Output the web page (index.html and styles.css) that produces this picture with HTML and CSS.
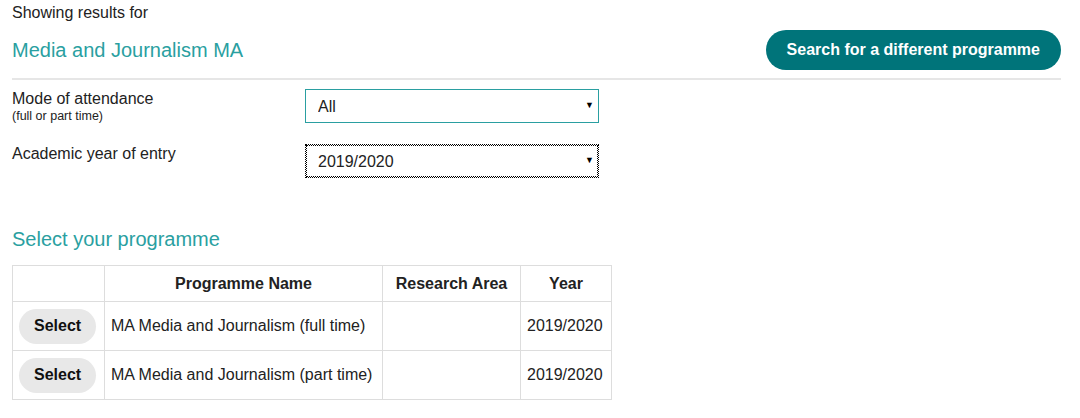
FILE: index.html
```html
<!DOCTYPE html>
<html>
<head>
  <meta charset="UTF-8">
  <title>Select your programme</title>
  <link rel="stylesheet" href="styles.css">
</head>
<body>
  <div class="page">
    <p class="intro">Showing results for</p>

    <div class="results-header">
      <h2 class="title">Media and Journalism MA</h2>
      <button class="search-button">Search for a different programme</button>
    </div>

    <div class="filters">
      <div class="filter-row">
        <label for="mode" class="filter-label">
          Mode of attendance
          <span class="hint">(full or part time)</span>
        </label>
        <div class="select-wrap">
          <select id="mode" class="field">
            <option>All</option>
            <option>Full time</option>
            <option>Part time</option>
          </select>
          <span class="arrow">&#9660;</span>
        </div>
      </div>

      <div class="filter-row">
        <label for="year" class="filter-label">Academic year of entry</label>
        <div class="select-wrap">
          <select id="year" class="field focused">
            <option>2019/2020</option>
            <option>2020/2021</option>
          </select>
          <span class="arrow">&#9660;</span>
        </div>
      </div>
    </div>

    <h2 class="title section-title">Select your programme</h2>

    <table class="programmes">
      <thead>
        <tr>
          <th class="col-select"></th>
          <th class="col-name">Programme Name</th>
          <th class="col-area">Research Area</th>
          <th class="col-year">Year</th>
        </tr>
      </thead>
      <tbody>
        <tr>
          <td><button class="select-button">Select</button></td>
          <td>MA Media and Journalism (full time)</td>
          <td></td>
          <td>2019/2020</td>
        </tr>
        <tr>
          <td><button class="select-button">Select</button></td>
          <td>MA Media and Journalism (part time)</td>
          <td></td>
          <td>2019/2020</td>
        </tr>
      </tbody>
    </table>
  </div>
</body>
</html>
```

FILE: styles.css
```css
:root {
  --teal: #2a9fa1;
  --teal-dark: #00747a;
  --text: #222222;
  --border-light: #dddddd;
  --button-grey: #e8e8e8;
}

body {
  margin: 0;
  background: #ffffff;
  color: var(--text);
  font-family: 'Liberation Sans', Arial, sans-serif;
  font-size: 16px;
}

.page {
  padding: 3px 19px 0 12px;
}

.intro {
  margin: 0;
  line-height: 20px;
}

.results-header {
  display: flex;
  justify-content: space-between;
  align-items: center;
  margin-top: 7px;
  padding-bottom: 8px;
  border-bottom: 2px solid #e6e6e6;
}

.title {
  margin: 0;
  font-size: 20px;
  font-weight: normal;
  line-height: 24px;
  color: var(--teal);
}

.search-button {
  height: 40px;
  padding: 0 21px;
  border: none;
  border-radius: 20px;
  background: var(--teal-dark);
  color: #ffffff;
  font-family: inherit;
  font-size: 16px;
  font-weight: bold;
  cursor: pointer;
}

.filters {
  display: flex;
  flex-direction: column;
  gap: 21px;
  margin-top: 9px;
}

.filter-row {
  display: flex;
  align-items: flex-start;
}

.filter-label {
  width: 293px;
  padding-top: 1px;
  line-height: 18px;
}

.hint {
  display: block;
  margin-top: 2px;
  font-size: 12.5px;
  line-height: 13px;
}

.select-wrap {
  position: relative;
  width: 294px;
}

.field {
  appearance: none;
  -webkit-appearance: none;
  width: 100%;
  height: 34px;
  padding: 0 12px;
  border: 1px solid var(--teal);
  border-radius: 0;
  background: #ffffff;
  color: var(--text);
  font-family: inherit;
  font-size: 16px;
}

.field.focused {
  border: 1px dotted #000000;
  outline: 1px dotted #000000;
  outline-offset: -2px;
}

.arrow {
  position: absolute;
  right: 5px;
  top: 11px;
  font-size: 9px;
  color: #000000;
  pointer-events: none;
}

.section-title {
  margin-top: 49px;
  margin-bottom: 14px;
}

.programmes {
  border-collapse: collapse;
  border: 1px solid var(--border-light);
}

.programmes th,
.programmes td {
  border: 1px solid var(--border-light);
  padding: 0 6px;
}

.programmes th {
  height: 35px;
  font-weight: bold;
  text-align: center;
}

.programmes td {
  height: 48px;
}

.col-select { width: 79px; }
.col-name { width: 265px; }
.col-area { width: 125px; }
.col-year { width: 78px; }

.select-button {
  height: 35px;
  padding: 0 15px;
  border: none;
  border-radius: 18px;
  background: var(--button-grey);
  color: #111111;
  font-family: inherit;
  font-size: 16px;
  font-weight: bold;
  cursor: pointer;
}
```
